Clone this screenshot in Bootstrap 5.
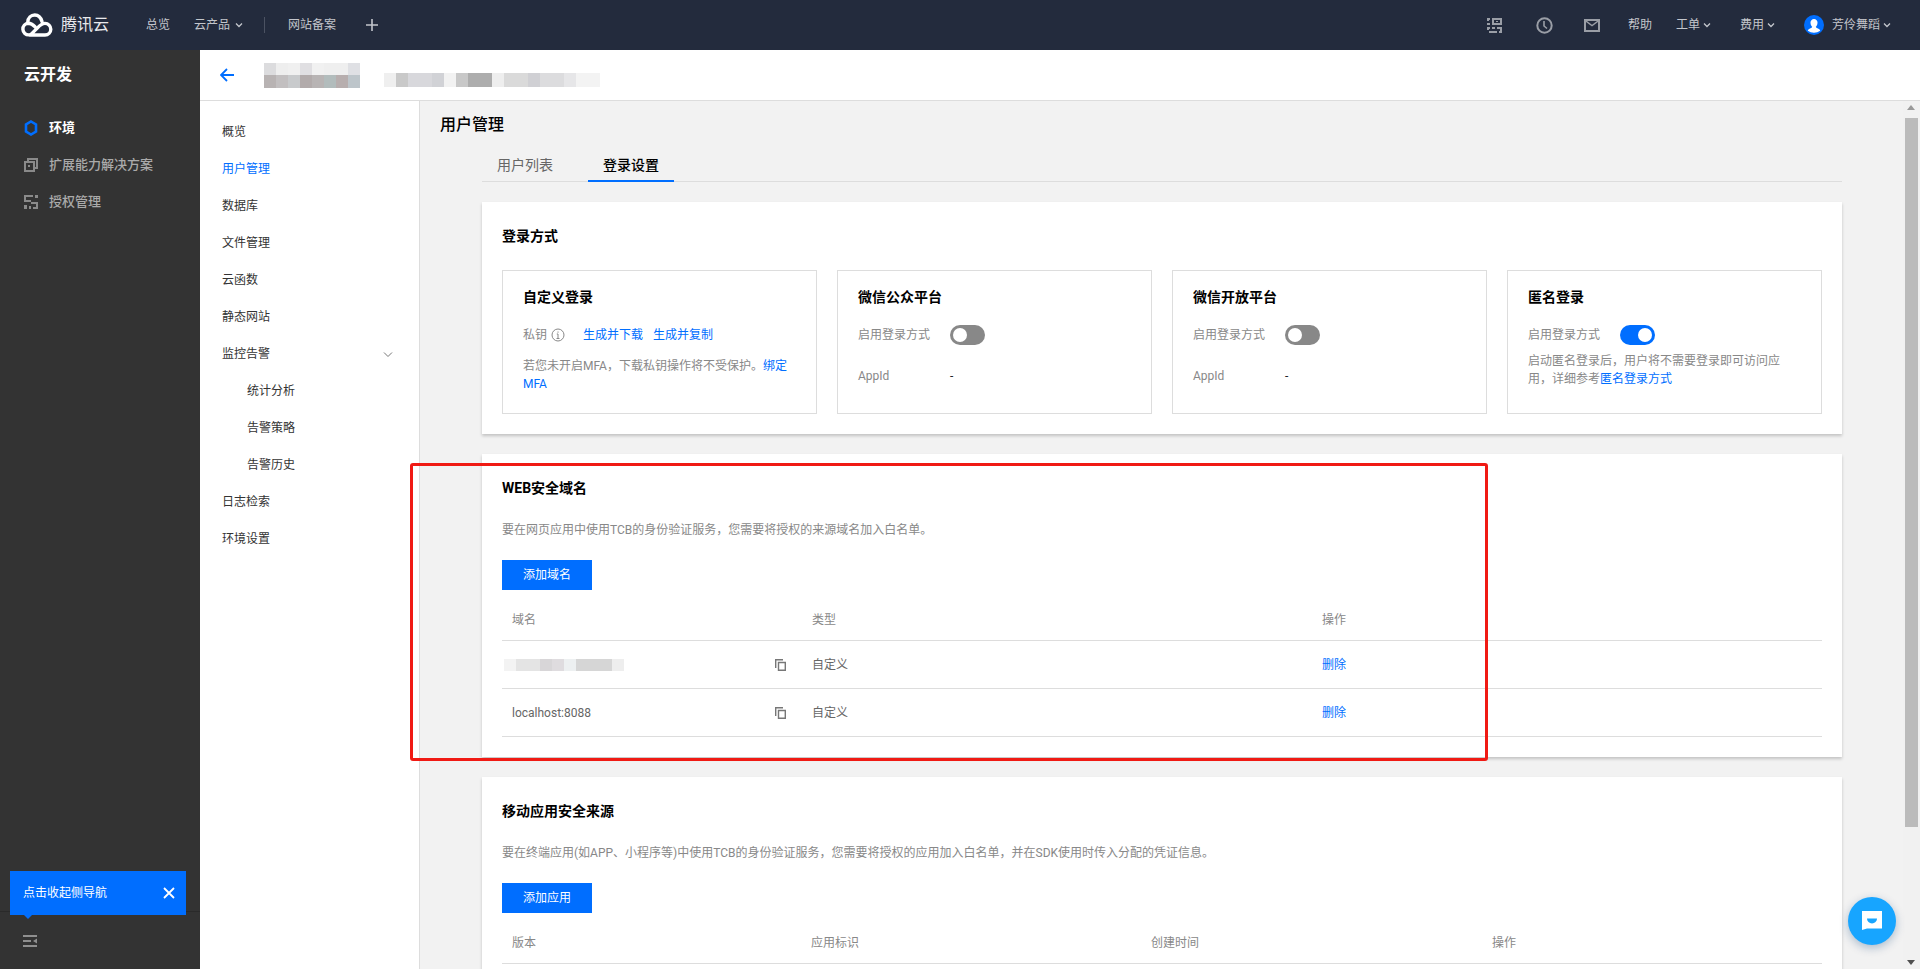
<!DOCTYPE html>
<html lang="zh-CN">
<head>
<meta charset="utf-8">
<title>云开发</title>
<link href="https://cdn.jsdelivr.net/npm/bootstrap@5.3.0/dist/css/bootstrap.min.css" rel="stylesheet">
<style>
html,body{height:100%;overflow:hidden}
body{font-family:Roboto,"Noto Sans CJK SC",sans-serif;font-size:12px;color:#444;background:#f2f2f2;position:relative}
a{text-decoration:none}
.blue-link{color:#006eff}
.topbar{height:50px;background:#232b3d;color:#c3c6cc;padding:0;flex-wrap:nowrap;justify-content:flex-start}
.brand-box{width:146px;padding-left:20px;gap:8px}
.brand-name{font-size:16px;color:#e8e9ec;letter-spacing:0}
.top-item{color:#c3c6cc;font-size:12px;display:inline-flex;align-items:center;gap:5px}
.top-gap-a{margin-right:24px}
.top-sep{width:1px;height:16px;background:#4b5262;margin:0 23px 0 21px}
.top-plus{margin-left:30px}
.top-right{padding-right:29px}
.gap-tight{gap:3px}
.chev{width:8px;height:6px;flex:none}
.page-body{height:919px}
.sidebar{width:200px;background:#333;position:relative;flex:none}
.side-title{height:50px;padding-left:24px;font-size:16px;font-weight:700;color:#fff}
.side-list{padding-top:9px}
.side-item{height:37px;padding-left:24px;gap:11px;font-size:13px;color:#aaa;font-weight:500}
.side-item.is-on{color:#fff;font-weight:700}
.side-foot{margin-top:auto;height:58px;border-top:1px solid #2a2a2a;padding:23px 0 0 23px}
.guide-tip{position:absolute;left:10px;bottom:54px;width:176px;height:44px;background:#006eff;color:#fff;padding:0 11px 0 13px}
.guide-tip::after{content:"";position:absolute;left:13px;bottom:-4px;border:5px solid transparent;border-top-color:#006eff;border-bottom:0}
.main-col{min-width:0}
.body-row{min-height:0}
.sub-head{height:51px;background:#fff;border-bottom:1px solid #ddd;padding-left:20px;flex:none}
.mosaic-a{width:96px;height:25px;margin-left:30px;background:linear-gradient(90deg,#dcdcde 0 12px,#eee 12px 24px,#f0f0f0 24px 36px,#e0dfe2 36px 48px,#f1f1f1 48px 60px,#efefef 60px 84px,#dfe0e4 84px 96px) top/100% 12px no-repeat,linear-gradient(90deg,#b8b3b3 0 12px,#c2bfc0 12px 24px,#c8cacc 24px 36px,#b2abab 36px 48px,#b8b4b4 48px 60px,#b2bcbc 60px 72px,#b7aeae 72px 84px,#bdc5ca 84px 96px) bottom/100% 13px no-repeat}
.mosaic-b{width:216px;height:14px;margin-left:24px;margin-top:10px;background:linear-gradient(90deg,#efefef 0 12px,#c9c9c9 12px 24px,#d8d8dc 24px 48px,#d1d2d6 48px 60px,#f2f2f2 60px 72px,#c8c8c8 72px 84px,#adadad 84px 108px,#eee 108px 120px,#dadada 120px 144px,#d0d0d4 144px 156px,#dcdcde 156px 180px,#e6e6e8 180px 192px,#f3f3f3 192px 216px)}
.sec-nav{width:220px;background:#fff;border-right:1px solid #ddd;padding-top:13px;flex:none}
.sec-link{height:37px;line-height:37px;padding:0 0 0 22px;color:#333;font-size:12px;position:relative}
.sec-link.is-on{color:#006eff}
.sec-link.is-sub{padding-left:47px}
.sec-chev{position:absolute;left:183px;top:15px;width:10px;height:7px}
.content-box{overflow:hidden;padding-right:61px;min-width:0}
.page-title{height:48px;line-height:48px;padding-left:20px;font-size:16px;font-weight:500;color:#000}
.content-inner{margin-left:62px}
.tab-row{height:33px;border-bottom:1px solid #ddd;margin-bottom:20px;gap:20px}
.tab-link{height:33px;line-height:32px;padding:0 15px;font-size:14px;color:#666;border-bottom:2px solid transparent}
.tab-link.is-on{color:#000;border-bottom-color:#006eff;font-weight:500}
.panel{border:0;border-radius:0;box-shadow:0 2px 3px rgba(0,0,0,.2);padding:20px;margin-bottom:20px}
.panel-title{height:28px;line-height:28px;font-size:14px;font-weight:700;color:#000}
.method-grid{display:grid;grid-template-columns:repeat(4,315px);gap:20px;margin-top:20px}
.method{height:144px;border:1px solid #ddd;padding:16px 20px 0}
.method-title{height:20px;line-height:20px;font-size:14px;font-weight:700;color:#000;margin-bottom:18px}
.field-row{height:20px;line-height:20px;color:#888}
.field-label{width:92px;flex:none}
.info-ico{margin-left:4px}
.link-first{margin-left:18px}
.link-next{margin-left:10px}
.note{line-height:18px;color:#888;margin-top:12px}
.note-tight{margin-top:7px}
.appid-row{margin-top:21px}
.toggle-pill{width:35px;height:20px;border-radius:10px;background:#888;position:relative;display:block}
.toggle-pill::after{content:"";position:absolute;left:3px;top:3px;width:14px;height:14px;border-radius:50%;background:#fff}
.toggle-pill.is-on{background:#006eff}
.toggle-pill.is-on::after{left:18px}
.desc{height:20px;line-height:20px;margin-top:18px;color:#888}
.add-btn{width:90px;height:30px;margin-top:20px;padding:0;border:0;border-radius:0;background:#006eff;font-size:12px;color:#fff;display:block}
.dom-table{table-layout:fixed;width:1320px;margin:10px 0 0;font-size:12px;--bs-table-bg:transparent;border-collapse:separate;border-spacing:0}
.dom-table th{height:41px;padding:0 10px;font-weight:400;color:#888;border-bottom:1px solid #ddd;vertical-align:middle}
.dom-table td{height:48px;padding:0 10px;color:#666;border-bottom:1px solid #ddd;vertical-align:middle}
.col-w300{width:300px}.col-w510{width:510px}.col-w299{width:299px}.col-w340{width:340px}.col-w341{width:341px}
.dom-cell{padding-right:6px}
.mosaic-c{width:120px;height:12px;margin-left:-8px;background:linear-gradient(90deg,#f3f3f3 0 12px,#e4e4e4 12px 36px,#d8d6d8 36px 48px,#dfdcdf 48px 60px,#edf0f1 60px 72px,#d6d6d6 72px 108px,#eee 108px 120px)}
.scroll-col{width:17px;flex:none;background:#f1f1f1;position:relative}
.scroll-thumb{position:absolute;left:2px;top:17px;width:13px;height:709px;background:#bbb}
.scroll-up,.scroll-down{position:absolute;left:4px;border:4px solid transparent}
.scroll-up{top:4px;border-bottom:5px solid #999;border-top:0}
.scroll-down{bottom:4px;border-top:5px solid #505050;border-bottom:0}
.mark-frame{position:absolute;left:410px;top:463px;width:1078px;height:298px;border:3px solid #f01a14;border-radius:3px;pointer-events:none}
.chat-fab{position:absolute;left:1848px;top:897px;width:48px;height:48px;border-radius:50%;background:#17a5ff;box-shadow:0 3px 10px rgba(0,60,120,.3)}
.ml-34{margin-left:34px}.ml-31{margin-left:31px}.ml-28{margin-left:28px}.ml-24{margin-left:24px}.ml-29{margin-left:29px}.ml-8{margin-left:8px}
</style>
</head>
<body class="d-flex flex-column">
<nav class="navbar topbar">
  <a class="brand-box d-flex align-items-center" href="#">
    <svg width="33" height="24" viewBox="0 0 33 24" fill="none" stroke="#fff" stroke-width="3.400" stroke-linecap="round" stroke-linejoin="round"><path d="M22 8.500C20.800 4.500 18 2 14.800 2 11 2 8 5 7.800 9"/><path d="M9.500 22H25a5.800 5.800 0 0 0 0-11.600c-4 0-6 3-8.500 5.500l-4 4c-1 1-2 2-3.500 2a5.800 5.800 0 0 1-.6-11.600c2.600 0 4.600 1.500 6.600 3.500"/></svg>
    <span class="brand-name">腾讯云</span>
  </a>
  <a class="top-item top-gap-a" href="#">总览</a>
  <a class="top-item" href="#">云产品 <svg class="chev" viewBox="0 0 8 6" fill="none" stroke="#c3c6cc" stroke-width="1.300"><path d="M1 1.500l3 3 3-3"/></svg></a>
  <span class="top-sep"></span>
  <a class="top-item" href="#">网站备案</a>
  <svg class="top-plus" width="12" height="12" viewBox="0 0 12 12" fill="none" stroke="#c3c6cc" stroke-width="1.600"><path d="M6 0v12M0 6h12"/></svg>
  <div class="d-flex align-items-center ms-auto h-100 top-right">
    <svg width="15" height="15" viewBox="0 0 15 15" fill="#9a9ea6"><path d="M0 0h3v2H2v1H0zM5 0h10v7H5zM7 2v3h6V2zM9 3h2v1H9zM0 5h3v2H0zM0 9h3v2H2v1H0zM5 9h3v2H5zM10 9h5v6h-3v-2h1v-2h-3zM2 13h8v2H2z" fill-rule="evenodd"/></svg>
    <svg class="ml-34" width="17" height="17" viewBox="0 0 17 17" fill="none" stroke="#9a9ea6" stroke-width="2"><circle cx="8.500" cy="8.500" r="7.200"/><path d="M8 4v5l3 2.500" stroke-width="1.600"/></svg>
    <svg class="ml-31" width="16" height="13" viewBox="0 0 16 13" fill="#9a9ea6"><path d="M0 0h16v13H0zM2 3v8h12V3L8 7.500zM3 2l5 3.800L13 2z" fill-rule="evenodd"/></svg>
    <a class="top-item ml-28" href="#">帮助</a>
    <a class="top-item ml-24 gap-tight" href="#">工单<svg class="chev" viewBox="0 0 8 6" fill="none" stroke="#c3c6cc" stroke-width="1.300"><path d="M1 1.500l3 3 3-3"/></svg></a>
    <a class="top-item ml-29 gap-tight" href="#">费用<svg class="chev" viewBox="0 0 8 6" fill="none" stroke="#c3c6cc" stroke-width="1.300"><path d="M1 1.500l3 3 3-3"/></svg></a>
    <svg class="ml-29" width="20" height="20" viewBox="0 0 20 20"><circle cx="10" cy="10" r="10" fill="#006eff"/><path d="M10 4a3.500 3.500 0 0 1 3.500 3.800c0 2-1 3.400-1.700 4 .1 1 1.700 1.500 3.500 2.500.6.400.8.900.9 1.400a10 10 0 0 1-12.400 0c.1-.5.300-1 .9-1.400 1.800-1 3.400-1.500 3.500-2.500-.7-.6-1.700-2-1.700-4A3.500 3.500 0 0 1 10 4z" fill="#fff"/></svg>
    <a class="top-item ml-8 gap-tight" href="#">芳伶舞蹈<svg class="chev" viewBox="0 0 8 6" fill="none" stroke="#c3c6cc" stroke-width="1.300"><path d="M1 1.500l3 3 3-3"/></svg></a>
  </div>
</nav>
<div class="d-flex page-body">
  <aside class="sidebar d-flex flex-column">
    <div class="side-title d-flex align-items-center">云开发</div>
    <div class="side-list">
      <div class="side-item is-on d-flex align-items-center"><svg width="14" height="16" viewBox="0 0 14 16" fill="none" stroke="#006eff" stroke-width="2.600"><path d="M7 1.500l5 3v7l-5 3-5-3v-7z"/></svg>环境</div>
      <div class="side-item d-flex align-items-center"><svg width="14" height="14" viewBox="0 0 14 14" fill="none" stroke="#8a8a8a" stroke-width="2"><path d="M4 4V1h9v9h-3M1 4h9v9H1zM5 7v2"/></svg>扩展能力解决方案</div>
      <div class="side-item d-flex align-items-center"><svg width="14" height="14" viewBox="0 0 14 14" fill="#8a8a8a"><path d="M0 0h9v2H2v3h5v2H0zM11 0h3v3h-3zM7 7h7v7H9v-2h3V9H7zM0 10h3v4H0zM5 11h2v3H5z"/></svg>授权管理</div>
    </div>
    <div class="side-foot"><svg class="d-block" width="14" height="12" viewBox="0 0 14 12" fill="#8f8f8f"><path d="M0 0h14v2H0zM0 5h8v2H0zM0 10h14v2H0zM14 3.500v5L10 6z"/></svg></div>
    <div class="guide-tip d-flex align-items-center justify-content-between"><span>点击收起侧导航</span><svg width="12" height="12" viewBox="0 0 12 12" fill="none" stroke="#fff" stroke-width="1.800"><path d="M1 1l10 10M11 1L1 11"/></svg></div>
  </aside>
  <div class="main-col flex-grow-1 d-flex flex-column">
    <header class="sub-head d-flex align-items-center">
      <svg width="14" height="14" viewBox="0 0 14 14" fill="none" stroke="#006eff" stroke-width="1.800"><path d="M7 1L1 7l6 6M1 7h13"/></svg>
      <div class="mosaic-a" aria-hidden="true"></div><div class="mosaic-b" aria-hidden="true"></div>
    </header>
    <div class="d-flex flex-grow-1 body-row">
      <nav class="sec-nav nav flex-column flex-nowrap">
        <a class="nav-link sec-link" href="#">概览</a>
        <a class="nav-link sec-link is-on" href="#">用户管理</a>
        <a class="nav-link sec-link" href="#">数据库</a>
        <a class="nav-link sec-link" href="#">文件管理</a>
        <a class="nav-link sec-link" href="#">云函数</a>
        <a class="nav-link sec-link" href="#">静态网站</a>
        <a class="nav-link sec-link" href="#">监控告警<svg class="sec-chev" viewBox="0 0 10 7" fill="none" stroke="#777" stroke-width="1"><path d="M1 1.500l4 4 4-4"/></svg></a>
        <a class="nav-link sec-link is-sub" href="#">统计分析</a>
        <a class="nav-link sec-link is-sub" href="#">告警策略</a>
        <a class="nav-link sec-link is-sub" href="#">告警历史</a>
        <a class="nav-link sec-link" href="#">日志检索</a>
        <a class="nav-link sec-link" href="#">环境设置</a>
      </nav>
      <main class="content-box flex-grow-1">
        <div class="page-title">用户管理</div>
        <div class="content-inner">
          <div class="nav tab-row">
            <a class="tab-link" href="#">用户列表</a>
            <a class="tab-link is-on" href="#">登录设置</a>
          </div>
          <section class="card panel">
            <div class="panel-title">登录方式</div>
            <div class="method-grid">
              <div class="method">
                <div class="method-title">自定义登录</div>
                <div class="field-row d-flex align-items-center">
                  <span>私钥</span>
                  <svg class="info-ico" width="14" height="14" viewBox="0 0 14 14" fill="none" stroke="#888"><circle cx="7" cy="7" r="6"/><path d="M7 6v4.500M5.500 10.500h3M5.800 6h1.200M7 3.500v1.200"/></svg>
                  <a class="blue-link link-first" href="#">生成并下载</a>
                  <a class="blue-link link-next" href="#">生成并复制</a>
                </div>
                <div class="note"><span>若您未开启MFA，下载私钥操作将不受保护。</span><a class="blue-link" href="#">绑定</a><br><a class="blue-link" href="#">MFA</a></div>
              </div>
              <div class="method">
                <div class="method-title">微信公众平台</div>
                <div class="field-row d-flex align-items-center"><span class="field-label">启用登录方式</span><span class="toggle-pill"></span></div>
                <div class="field-row appid-row d-flex align-items-center"><span class="field-label">AppId</span><span class="text-dark">-</span></div>
              </div>
              <div class="method">
                <div class="method-title">微信开放平台</div>
                <div class="field-row d-flex align-items-center"><span class="field-label">启用登录方式</span><span class="toggle-pill"></span></div>
                <div class="field-row appid-row d-flex align-items-center"><span class="field-label">AppId</span><span class="text-dark">-</span></div>
              </div>
              <div class="method">
                <div class="method-title">匿名登录</div>
                <div class="field-row d-flex align-items-center"><span class="field-label">启用登录方式</span><span class="toggle-pill is-on"></span></div>
                <div class="note note-tight">启动匿名登录后，用户将不需要登录即可访问应用，详细参考<a class="blue-link" href="#">匿名登录方式</a></div>
              </div>
            </div>
          </section>
          <section class="card panel">
            <div class="panel-title">WEB安全域名</div>
            <div class="desc">要在网页应用中使用TCB的身份验证服务，您需要将授权的来源域名加入白名单。</div>
            <button class="btn btn-primary add-btn" type="button">添加域名</button>
            <table class="table dom-table">
              <colgroup><col class="col-w300"><col class="col-w510"><col></colgroup>
              <thead><tr><th>域名</th><th>类型</th><th>操作</th></tr></thead>
              <tbody>
                <tr>
                  <td><div class="dom-cell d-flex align-items-center justify-content-between"><div class="mosaic-c" aria-hidden="true"></div><svg width="11" height="12" viewBox="0 0 11 12" fill="none" stroke="#777" stroke-width="1.400"><path d="M.7 9V.7H8"/><path d="M3.500 3.500h6.800v7.800H3.500z"/></svg></div></td>
                  <td>自定义</td><td><a class="blue-link" href="#">删除</a></td>
                </tr>
                <tr>
                  <td><div class="dom-cell d-flex align-items-center justify-content-between"><span>localhost:8088</span><svg width="11" height="12" viewBox="0 0 11 12" fill="none" stroke="#777" stroke-width="1.400"><path d="M.7 9V.7H8"/><path d="M3.500 3.500h6.800v7.800H3.500z"/></svg></div></td>
                  <td>自定义</td><td><a class="blue-link" href="#">删除</a></td>
                </tr>
              </tbody>
            </table>
          </section>
          <section class="card panel">
            <div class="panel-title">移动应用安全来源</div>
            <div class="desc">要在终端应用(如APP、小程序等)中使用TCB的身份验证服务，您需要将授权的应用加入白名单，并在SDK使用时传入分配的凭证信息。</div>
            <button class="btn btn-primary add-btn" type="button">添加应用</button>
            <table class="table dom-table">
              <colgroup><col class="col-w299"><col class="col-w340"><col class="col-w341"><col></colgroup>
              <thead><tr><th>版本</th><th>应用标识</th><th>创建时间</th><th>操作</th></tr></thead>
            </table>
          </section>
        </div>
      </main>
      <div class="scroll-col"><span class="scroll-up"></span><span class="scroll-thumb"></span><span class="scroll-down"></span></div>
    </div>
  </div>
</div>
<div class="mark-frame"></div>
<a class="chat-fab d-flex align-items-center justify-content-center" href="#" aria-label="客服">
  <svg width="20" height="20" viewBox="0 0 20 20"><path d="M0 0h20v17.500H5L0 19z" fill="#fff"/><path d="M5 7.500h10a5 5 0 0 1-10 0z" fill="#17a5ff"/></svg>
</a>
<script src="https://cdn.jsdelivr.net/npm/bootstrap@5.3.0/dist/js/bootstrap.bundle.min.js"></script>
</body>
</html>
